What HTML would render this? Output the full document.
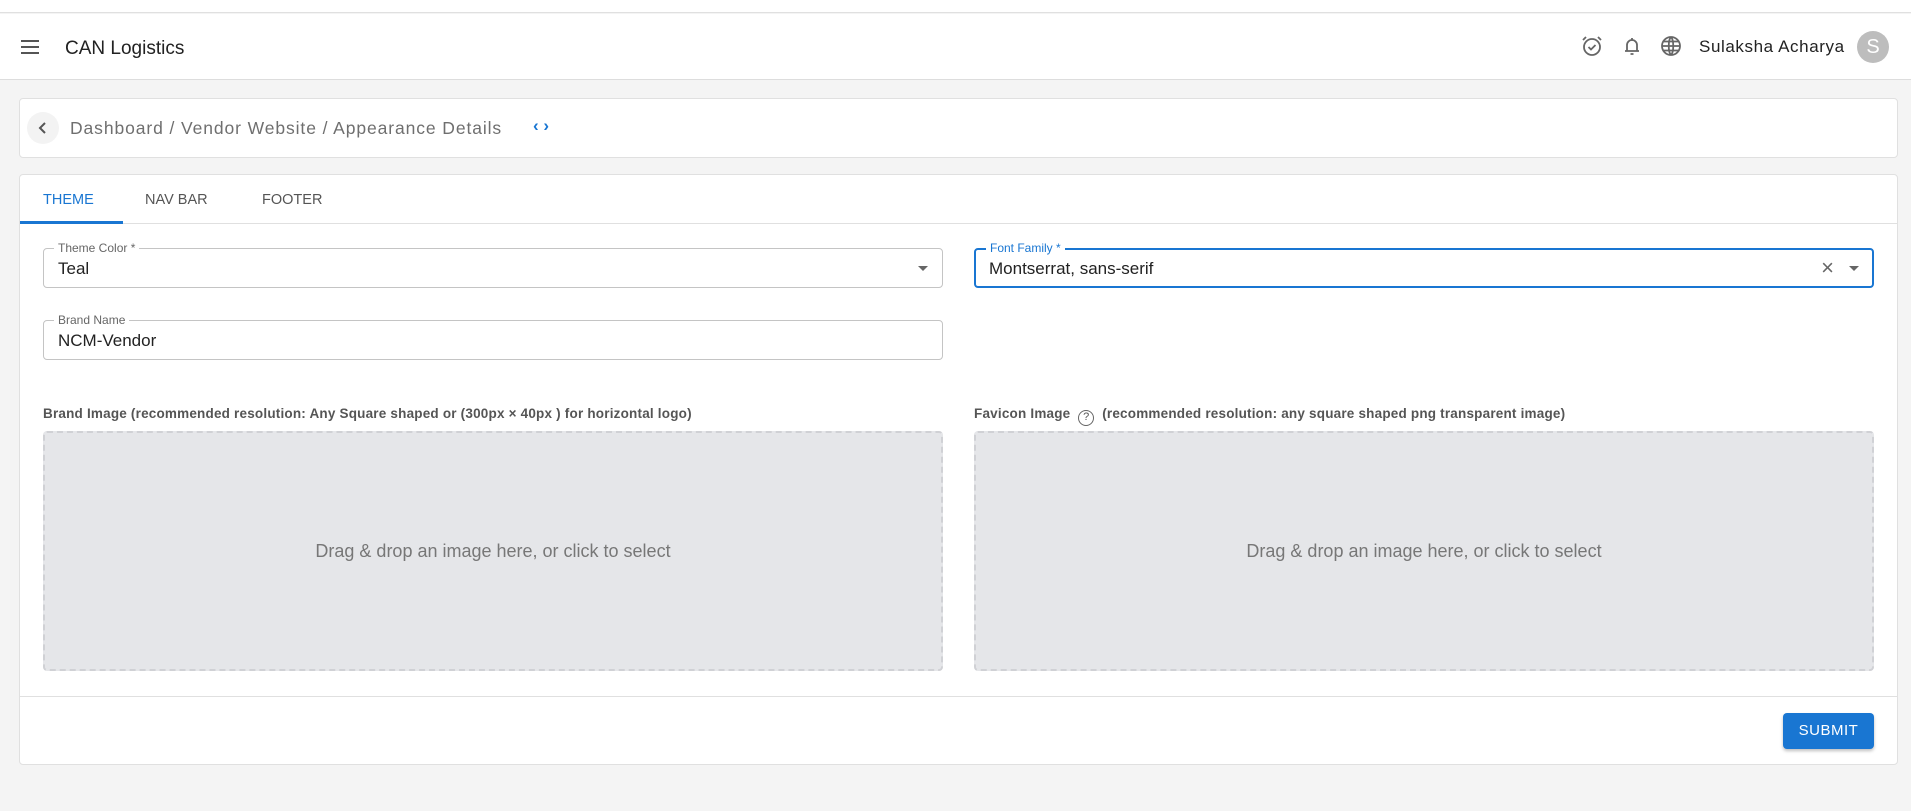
<!DOCTYPE html>
<html><head><meta charset="utf-8"><style>
*{box-sizing:border-box;margin:0;padding:0}
body{width:1911px;height:811px;background:#f4f4f4;font-family:"Liberation Sans",sans-serif;position:relative;overflow:hidden;color:#222}
.abs{position:absolute}
.top{left:0;top:0;width:1911px;height:13px;background:#fff;border-bottom:1px solid #e0e0e0}
.hdr{left:0;top:14px;width:1911px;height:66px;background:#fff;border-bottom:1px solid #ddd}
.card{background:#fff;border:1px solid #e0e0e0;border-radius:4px}
.fld{border:1px solid #c4c4c4;border-radius:4px;background:#fff}
.lbl{position:absolute;top:-8px;left:10px;background:#fff;padding:0 4px;font-size:12px;color:#666}
.val{position:absolute;left:14px;top:10px;font-size:17px;color:#222}
.caret{position:absolute;top:17px;width:0;height:0;border-left:5px solid transparent;border-right:5px solid transparent;border-top:5px solid #666}
.drop{background:#e5e6e9;border:2px dashed #d0d1d5;border-radius:4px;display:flex;align-items:center;justify-content:center;font-size:18px;color:#777}
.sec{font-size:13.5px;font-weight:bold;color:#555;letter-spacing:.2px}
</style></head><body>
<div class="abs top"></div>
<div class="abs hdr">
  <div class="abs" style="left:21px;top:26px;width:18px;height:2px;background:#555;box-shadow:0 6px 0 #555,0 12px 0 #555"></div>
  <div class="abs" style="left:65px;top:24px;font-size:19px;color:#222">CAN Logistics</div>
  <svg class="abs" style="left:1580px;top:20px" width="24" height="24" viewBox="0 0 24 24" fill="none" stroke="#666" stroke-width="1.8"><circle cx="12" cy="13" r="8"/><path d="M8.5 13l2.5 2.5 4.5-4.5M3 6l3-3M21 6l-3-3"/></svg>
  <svg class="abs" style="left:1620px;top:20px" width="24" height="24" viewBox="0 0 24 24" fill="none" stroke="#666" stroke-width="1.8"><path d="M7 17V11a5 5 0 0110 0v6M5 17h14M12 4v2M10.5 20h3"/></svg>
  <svg class="abs" style="left:1659px;top:20px" width="24" height="24" viewBox="0 0 24 24" fill="none" stroke="#666" stroke-width="1.8"><circle cx="12" cy="12" r="9"/><path d="M3 12h18M12 3c-3 3-3 15 0 18M12 3c3 3 3 15 0 18M4.5 7.5h15M4.5 16.5h15"/></svg>
  <div class="abs" style="left:1699px;top:23px;font-size:17px;color:#222;letter-spacing:.6px">Sulaksha Acharya</div>
  <div class="abs" style="left:1857px;top:17px;width:32px;height:32px;border-radius:50%;background:#bdbdbd;color:#fff;font-size:20px;text-align:center;line-height:32px">S</div>
</div>
<div class="abs card" style="left:19px;top:98px;width:1879px;height:60px">
  <div class="abs" style="left:7px;top:13px;width:32px;height:32px;border-radius:50%;background:#f3f3f3"></div>
  <svg class="abs" style="left:15px;top:21px" width="16" height="16" viewBox="0 0 16 16" fill="none" stroke="#555" stroke-width="2"><path d="M10 3L5 8l5 5"/></svg>
  <div class="abs" style="left:50px;top:19px;font-size:17.5px;color:#6f6f6f;letter-spacing:.9px;white-space:nowrap">Dashboard / Vendor Website / Appearance Details</div>
  <div class="abs" style="left:513px;top:17px;font-size:17px;color:#1976d2;font-weight:bold">‹ ›</div>
</div>
<div class="abs card" style="left:19px;top:174px;width:1879px;height:591px">
  <div class="abs" style="left:0;top:48px;width:1877px;height:1px;background:#e0e0e0"></div>
  <div class="abs" style="left:0;top:46px;width:103px;height:3px;background:#1976d2"></div>
  <div class="abs" style="left:23px;top:17px;font-size:14.5px;color:#1976d2">THEME</div>
  <div class="abs" style="left:125px;top:17px;font-size:14.5px;color:#555">NAV BAR</div>
  <div class="abs" style="left:242px;top:17px;font-size:14.5px;color:#555">FOOTER</div>

  <div class="abs fld" style="left:23px;top:73px;width:900px;height:40px"><span class="lbl">Theme Color *</span><span class="val">Teal</span><span class="caret" style="right:14px"></span></div>
  <div class="abs fld" style="left:954px;top:73px;width:900px;height:40px;border:2px solid #1976d2"><span class="lbl" style="color:#1976d2;top:-9px">Font Family *</span><span class="val" style="top:9px;left:13px">Montserrat, sans-serif</span>
    <span style="position:absolute;right:38px;top:5px;font-size:22px;color:#666">×</span><span class="caret" style="right:13px;top:16px"></span></div>
  <div class="abs fld" style="left:23px;top:145px;width:900px;height:40px"><span class="lbl">Brand Name</span><span class="val">NCM-Vendor</span></div>

  <div class="abs sec" style="left:23px;top:231px;white-space:nowrap">Brand Image (recommended resolution: Any Square shaped or (300px × 40px ) for horizontal logo)</div>
  <div class="abs sec" style="left:954px;top:231px;white-space:nowrap">Favicon Image &nbsp;<span style="display:inline-block;width:16px;height:16px;border:1.5px solid #666;border-radius:50%;text-align:center;line-height:13px;font-size:11px;font-weight:normal;vertical-align:-2px">?</span>&nbsp; (recommended resolution: any square shaped png transparent image)</div>
  <div class="abs drop" style="left:23px;top:256px;width:900px;height:240px">Drag &amp; drop an image here, or click to select</div>
  <div class="abs drop" style="left:954px;top:256px;width:900px;height:240px">Drag &amp; drop an image here, or click to select</div>

  <div class="abs" style="left:0;top:521px;width:1877px;height:1px;background:#e0e0e0"></div>
  <div class="abs" style="left:1763px;top:538px;width:91px;height:36px;background:#1976d2;border-radius:4px;box-shadow:0 2px 3px rgba(0,0,0,.25);color:#fff;font-size:15px;text-align:center;line-height:36px;letter-spacing:.5px">SUBMIT</div>
</div>
</body></html>
